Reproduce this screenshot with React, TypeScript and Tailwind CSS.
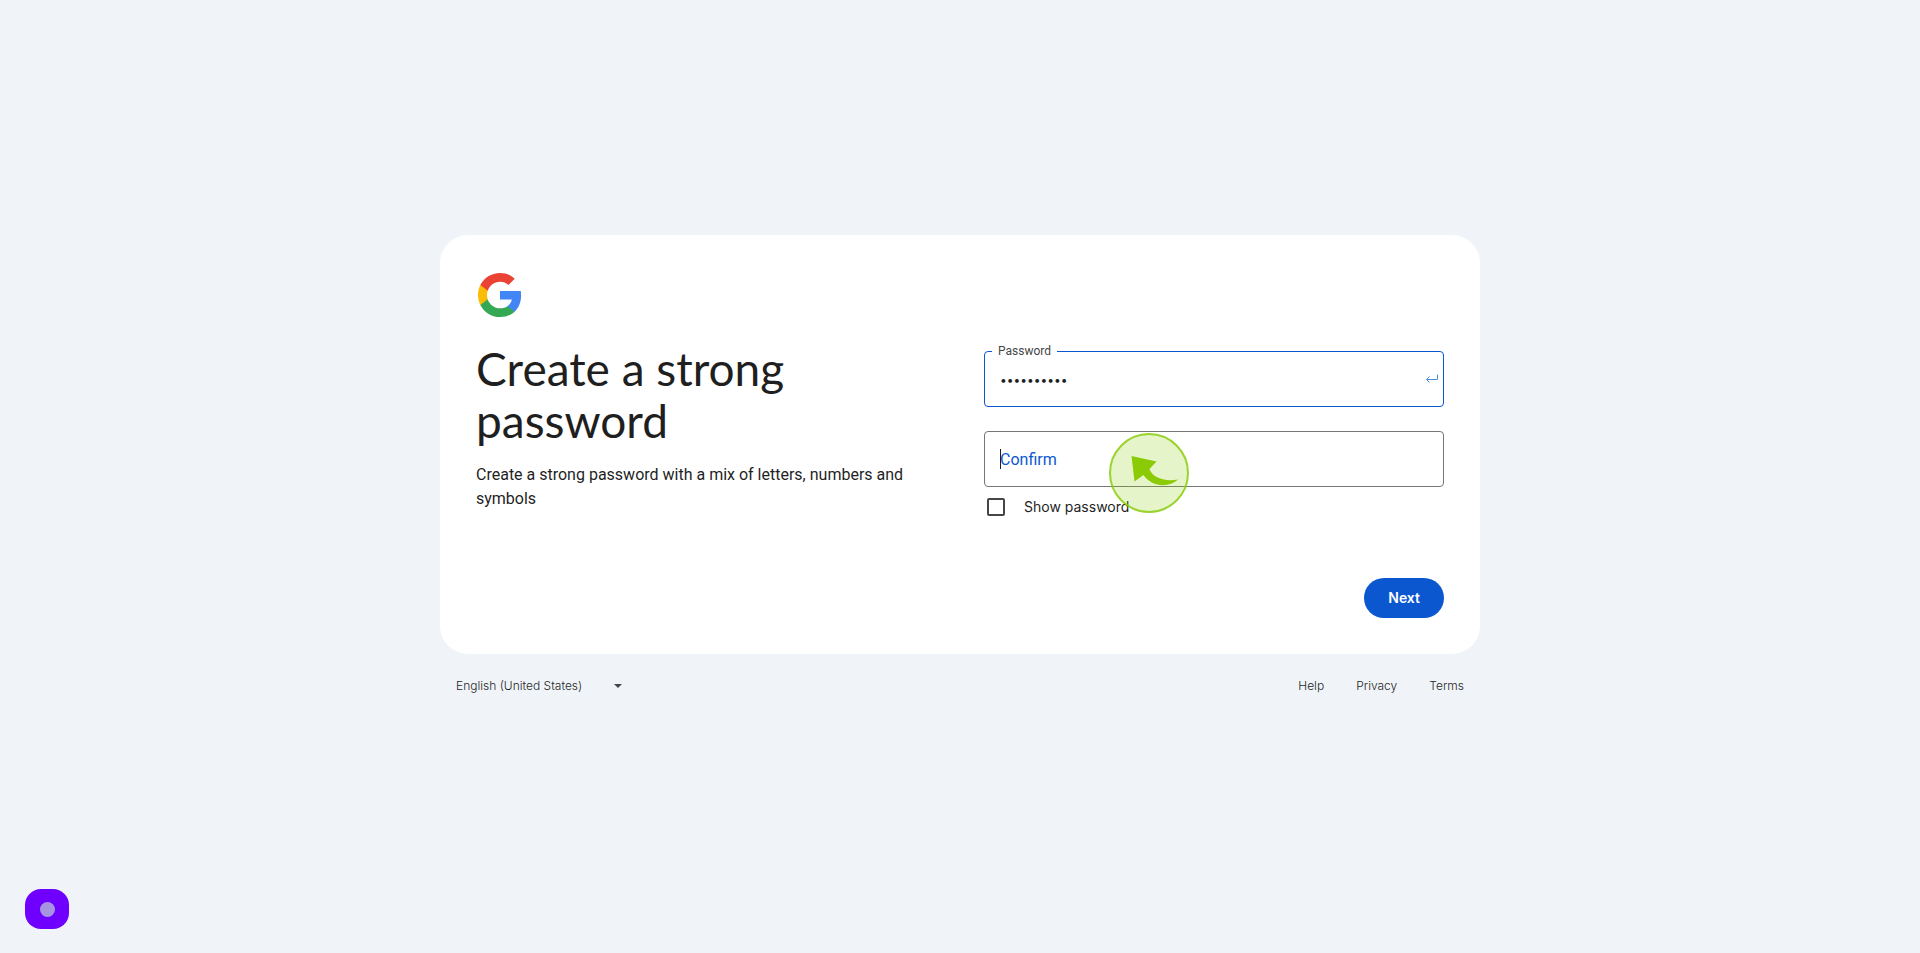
import { useState } from "react"

function GoogleLogo() {
  return (
    <svg className="size-12" viewBox="0 0 48 48" aria-hidden="true">
      <path fill="#4285F4" d="M45.12 24.5c0-1.56-.14-3.06-.4-4.5H24v8.51h11.84c-.51 2.75-2.06 5.08-4.39 6.64v5.52h7.11c4.16-3.83 6.56-9.47 6.56-16.17z" />
      <path fill="#34A853" d="M24 46c5.94 0 10.92-1.97 14.56-5.33l-7.11-5.52c-1.97 1.32-4.49 2.1-7.45 2.1-5.73 0-10.58-3.87-12.31-9.07H4.34v5.7C7.96 41.07 15.4 46 24 46z" />
      <path fill="#FBBC05" d="M11.69 28.18C11.25 26.86 11 25.45 11 24s.25-2.86.69-4.18v-5.7H4.34C2.85 17.09 2 20.45 2 24c0 3.55.85 6.91 2.34 9.88l7.35-5.7z" />
      <path fill="#EA4335" d="M24 10.75c3.23 0 6.13 1.11 8.41 3.29l6.31-6.31C34.91 4.18 29.93 2 24 2 15.4 2 7.96 6.93 4.34 14.12l7.35 5.7c1.73-5.2 6.58-9.07 12.31-9.07z" />
    </svg>
  )
}

function ClickMarker() {
  return (
    <svg className="pointer-events-none absolute left-[125px] top-[2px] size-20" viewBox="0 0 80 80" aria-hidden="true">
      <circle cx="40" cy="40" r="39" fill="#8bcc0a" fillOpacity="0.22" stroke="#8bcc0a" strokeOpacity="0.85" strokeWidth="2" />
      <path fill="#8acb06" d="M22.500 23L47.500 28.500L40.500 36C43 44 54 49 69 46.500C60 55 43 54.500 34.500 42L25.500 48.500Z" />
    </svg>
  )
}

export default function App() {
  const [show, setShow] = useState(false)
  const [password, setPassword] = useState("abcdefghij")

  return (
    <div className="flex min-h-screen flex-col items-center justify-center bg-[#f0f4f9] font-['Inter',sans-serif] text-[#1f1f1f]">
      <div className="w-full max-w-[1040px]">
        <main className="rounded-[28px] bg-white p-9">
          <GoogleLogo />
          <form className="mt-4" onSubmit={(e) => e.preventDefault()}>
            <div className="grid grid-cols-2 gap-12">
              <div className="pt-2">
                <h1 className="font-['Lato',sans-serif] text-[46px] leading-[52px]">Create a strong password</h1>
                <p className="mt-4 font-['Roboto',sans-serif] text-base">
                  Create a strong password with a mix of letters, numbers and symbols
                </p>
              </div>

              <div className="pt-4">
                {/* Password */}
                <div className="relative">
                  <input
                    id="password"
                    type={show ? "text" : "password"}
                    value={password}
                    onChange={(e) => setPassword(e.target.value)}
                    className="h-14 w-full rounded border border-[#0b57d0] px-[15px] text-xs outline-none"
                  />
                  <label htmlFor="password" className="absolute -top-2 left-2 bg-white px-1.5 font-['Roboto',sans-serif] text-xs text-[#444746]">
                    Password
                  </label>
                  <svg className="absolute right-1.5 top-[22px] h-3 w-3" viewBox="0 0 12 12" fill="none" stroke="#4a90d9" aria-hidden="true">
                    <path d="M11.500 1.500V6.500H0.500M3.500 3.500L0.500 6.500L3.500 9.500" />
                  </svg>
                </div>

                {/* Confirm */}
                <div className="relative mt-6">
                  <input
                    id="confirm"
                    type="password"
                    aria-label="Confirm"
                    placeholder="Confirm"
                    className="h-14 w-full rounded border border-[#747775] px-[15px] font-['Roboto',sans-serif] text-base outline-none placeholder:text-[#0b57d0]"
                  />
                  <span className="absolute left-4 top-[18px] h-5 w-px bg-[#1f1f1f]" />
                  <ClickMarker />
                </div>

                <label className="ml-[3px] mt-[10px] flex items-center gap-[19px] text-sm">
                  <input
                    type="checkbox"
                    checked={show}
                    onChange={(e) => setShow(e.target.checked)}
                    className="size-[18px] appearance-none rounded-xs border-2 border-[#444746] checked:bg-[#0b57d0]"
                  />
                  Show password
                </label>
              </div>
            </div>

            <div className="mt-[61px] flex justify-end">
              <button type="submit" className="h-10 rounded-full bg-[#0b57d0] px-6 text-sm font-semibold text-white">
                Next
              </button>
            </div>
          </form>
        </main>

        <footer className="flex h-16 items-center justify-between px-4 text-xs font-light text-[#1f1f1f]">
          <div className="relative">
            <select aria-label="Language" className="w-44 appearance-none bg-transparent outline-none">
              <option>English (United States)</option>
            </select>
            <svg className="pointer-events-none absolute right-2.5 top-1.5 h-1 w-2" viewBox="0 0 8 4" aria-hidden="true">
              <path fill="#444746" d="M0 0h8L4 4z" />
            </svg>
          </div>
          <nav className="flex gap-8">
            <a href="#help">Help</a>
            <a href="#privacy">Privacy</a>
            <a href="#terms">Terms</a>
          </nav>
        </footer>
      </div>

      {/* Recorder button */}
      <button aria-label="Record" className="fixed bottom-6 left-[25px] flex h-10 w-11 items-center justify-center rounded-2xl bg-[#6f00ff]">
        <span className="size-[15px] rounded-full bg-[#a794e0]" />
      </button>
    </div>
  )
}
